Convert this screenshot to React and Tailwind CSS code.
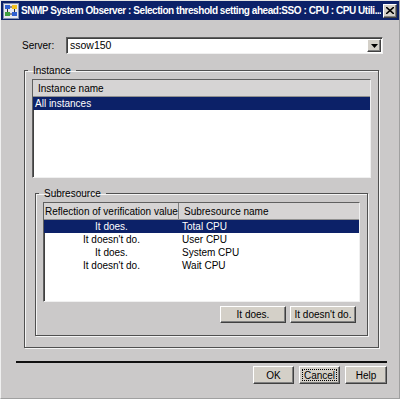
const raised =
  "bg-[#d4d0c8] border border-t-white border-l-white border-r-[#404040] border-b-[#404040] shadow-[inset_-1px_-1px_0_#808080]";
const sunken =
  "border border-t-[#606060] border-l-[#606060] border-r-[#f0f0f0] border-b-[#f0f0f0] shadow-[inset_1px_1px_0_#404040]";
const etched =
  "border border-[#505050] shadow-[1px_1px_0_#f4f4f4,inset_1px_1px_0_#f4f4f4]";

const rows = [
  { v: "It does.", n: "Total CPU" },
  { v: "It doesn't do.", n: "User CPU" },
  { v: "It does.", n: "System CPU" },
  { v: "It doesn't do.", n: "Wait CPU" },
];

const TitleIcon = () => (
  <svg width="16" height="16" viewBox="0 0 16 16">
    <rect x="0.5" y="0.5" width="15" height="15" fill="#e8e8f0" stroke="#8090b0" />
    <rect x="2" y="2" width="5" height="4" fill="#3060d0" />
    <rect x="9" y="2" width="5" height="4" fill="#f0c020" />
    <rect x="2" y="9" width="5" height="4" fill="#40a040" />
    <rect x="9" y="9" width="5" height="4" fill="#3060d0" />
    <path d="M4.5 6v3M11.5 6v3M7 4h2M7 11h2" stroke="#303030" strokeWidth="1" />
  </svg>
);

const Btn = ({ children, w, h, focus }) => (
  <button className={`${raised} ${w} ${h} flex items-center justify-center text-black`}>
    {focus ? (
      <span className="flex-1 self-stretch m-[2px] border border-dotted border-black flex items-center justify-center">
        {children}
      </span>
    ) : (
      children
    )}
  </button>
);

export default function App() {
  return (
    <div className="w-[404px] h-[404px] bg-white font-['Liberation_Sans',Arial,sans-serif] text-[10px] text-black">
      <div className="w-[400px] h-[399px] bg-[#cbc9c9] border border-t-[#e4e4e4] border-l-[#f0f0f0] border-r-[#a0a0a0] border-b-[#a0a0a0] flex flex-col">
        {/* title bar */}
        <div className="h-[19px] bg-[#0c2168] flex items-center pl-[2px] pr-[2px] gap-[2px]">
          <TitleIcon />
          <span className="flex-1 whitespace-nowrap overflow-hidden text-white font-bold text-[10px] tracking-[-0.45px]">
            SNMP System Observer : Selection threshold setting ahead:SSO : CPU : CPU Utili...
          </span>
          <div className={`${raised} w-[14px] h-[14px] flex items-center justify-center`}>
            <svg width="8" height="7" viewBox="0 0 8 7">
              <path d="M0 0l8 7M8 0l-8 7" stroke="#000" strokeWidth="1.6" />
            </svg>
          </div>
        </div>

        {/* server row */}
        <div className="mt-[17px] flex items-center pl-[21px] pr-[16px]">
          <span className="w-[44px]">Server:</span>
          <div className={`${sunken} flex-1 h-[17px] bg-white flex items-center`}>
            <span className="flex-1 pl-[3px] text-[10.5px]">ssow150</span>
            <div className={`${raised} w-[14px] h-[13px] mr-[1px] flex items-center justify-center`}>
              <svg width="7" height="4" viewBox="0 0 7 4">
                <path d="M0 0h7L3.5 4z" fill="#000" />
              </svg>
            </div>
          </div>
        </div>

        {/* instance group */}
        <fieldset className={`${etched} mt-[10px] ml-[23px] mr-[20px] px-[7px] pb-[11px]`}>
          <legend className="ml-[-4px] px-[5px] leading-[13px]">Instance</legend>
          <div className={`${sunken} mt-[2px] h-[99px] bg-white flex flex-col`}>
            <div className="h-[17px] bg-[#d6d4d4] border-b border-[#909090] flex items-center pl-[5px]">
              Instance name
            </div>
            <div className="h-[13px] bg-[#0c2168] text-white flex items-center pl-[2px]">
              All instances
            </div>
          </div>

          {/* subresource group */}
          <fieldset className={`${etched} mt-[9px] ml-[3px] mr-[3px] px-[7px] pb-[12px]`}>
            <legend className="ml-[-4px] px-[5px] leading-[13px]">Subresource</legend>
            <div className={`${sunken} mt-[2px] h-[100px] bg-white flex flex-col`}>
              <div className="h-[17px] bg-[#d6d4d4] border-b border-[#909090] flex">
                <div className="w-[135px] border-r border-[#808080] flex items-center pl-[1px] whitespace-nowrap">
                  Reflection of verification value
                </div>
                <div className="flex items-center pl-[5px]">Subresource name</div>
              </div>
              {rows.map((r, i) => (
                <div
                  key={r.n}
                  className={`h-[13px] flex items-center ${i === 0 ? "bg-[#0c2168] text-white" : ""}`}
                >
                  <div className="w-[135px] text-center whitespace-nowrap">{r.v}</div>
                  <div className="pl-[3px]">{r.n}</div>
                </div>
              ))}
            </div>
            <div className="mt-[4px] flex justify-end gap-[4px] pr-[4px]">
              <Btn w="w-[66px]" h="h-[17px]">It does.</Btn>
              <Btn w="w-[66px]" h="h-[17px]">It doesn't do.</Btn>
            </div>
          </fieldset>
        </fieldset>

        {/* separator */}
        <div className="mt-[13px] ml-[15px] mr-[12px] h-[2px] bg-[#101010]" />

        {/* bottom buttons */}
        <div className="mt-[3px] flex justify-end gap-[5px] pr-[12px]">
          <Btn w="w-[41px]" h="h-[18px]">OK</Btn>
          <Btn w="w-[41px]" h="h-[18px]" focus>
            Cancel
          </Btn>
          <Btn w="w-[42px]" h="h-[18px]">Help</Btn>
        </div>
      </div>
    </div>
  );
}
